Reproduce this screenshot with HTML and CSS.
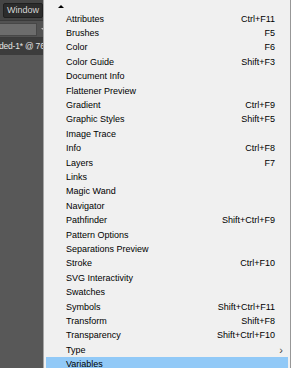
FILE: index.html
```html
<!doctype html>
<html>
  <head>
    <title>Window menu</title>
    <meta charset="UTF-8" />
    <link rel="stylesheet" href="styles.css">
  </head>
  <body>
    <div class="app">
      <div class="menubar">
        <button class="menubar-btn">Window</button>
        <div class="menubar-end"></div>
      </div>
      <div class="controlbar">
        <div class="ctl-input"></div>
        <span class="ctl-arrow"></span>
        <div class="controlbar-end"></div>
      </div>
      <div class="tabbar">
        <span class="doc-tab">ded-1* @ 76%</span>
      </div>
      <div class="workspace">
        <div class="pasteboard"></div>
        <div class="artboard-col">
          <div class="artboard">
            <p>h</p>
            <p>u</p>
            <p>c</p>
          </div>
        </div>
      </div>
    </div>

    <div class="dropdown">
      <div class="scroll-up"><span class="tri"></span></div>
      <ul class="items">
        <li><span>Attributes</span><span class="key">Ctrl+F11</span></li>
        <li><span>Brushes</span><span class="key">F5</span></li>
        <li><span>Color</span><span class="key">F6</span></li>
        <li><span>Color Guide</span><span class="key">Shift+F3</span></li>
        <li><span>Document Info</span></li>
        <li><span>Flattener Preview</span></li>
        <li><span>Gradient</span><span class="key">Ctrl+F9</span></li>
        <li><span>Graphic Styles</span><span class="key">Shift+F5</span></li>
        <li><span>Image Trace</span></li>
        <li><span>Info</span><span class="key">Ctrl+F8</span></li>
        <li><span>Layers</span><span class="key">F7</span></li>
        <li><span>Links</span></li>
        <li><span>Magic Wand</span></li>
        <li><span>Navigator</span></li>
        <li><span>Pathfinder</span><span class="key">Shift+Ctrl+F9</span></li>
        <li><span>Pattern Options</span></li>
        <li><span>Separations Preview</span></li>
        <li><span>Stroke</span><span class="key">Ctrl+F10</span></li>
        <li><span>SVG Interactivity</span></li>
        <li><span>Swatches</span></li>
        <li><span>Symbols</span><span class="key">Shift+Ctrl+F11</span></li>
        <li><span>Transform</span><span class="key">Shift+F8</span></li>
        <li><span>Transparency</span><span class="key">Shift+Ctrl+F10</span></li>
        <li><span>Type</span><span class="sub">&#8250;</span></li>
        <li class="active"><span>Variables</span></li>
      </ul>
    </div>
  </body>
</html>
```
FILE: styles.css
```css
html,
body {
  margin: 0;
  padding: 0;
  height: 100%;
  overflow: hidden;
}
body {
  font: 400 9px/1 'Liberation Sans', Arial, sans-serif;
  background: #585858;
}
.app {
  display: flex;
  flex-direction: column;
  height: 100%;
}

/* top application bar */
.menubar {
  display: flex;
  align-items: center;
  height: 20px;
  background: #454545;
  padding-left: 3px;
}
.menubar-btn {
  font: inherit;
  color: #d6d6d6;
  background: #2c2c2c;
  border: 1px solid #202020;
  border-radius: 2px;
  height: 15px;
  width: 40px;
  padding: 0;
  white-space: nowrap;
}
.menubar-end {
  margin-left: auto;
  align-self: stretch;
  width: 40px;
  background: #ececec;
}

.controlbar {
  display: flex;
  align-items: center;
  height: 16px;
  background: #525252;
  border-top: 1px solid #3a3a3a;
  border-bottom: 1px solid #3a3a3a;
}
.ctl-input {
  width: 36px;
  height: 11px;
  background: #6c6c6c;
  border: 1px solid #474747;
  border-left: 0;
}
.ctl-arrow {
  margin-left: 4px;
  border-left: 2px solid transparent;
  border-right: 2px solid transparent;
  border-top: 2px solid #bbb;
}
.controlbar-end {
  margin-left: auto;
  align-self: stretch;
  width: 40px;
  background: #3a3a3a;
}

.tabbar {
  height: 17px;
  display: flex;
  align-items: center;
  background: #3c3c3c;
  overflow: hidden;
}
.doc-tab {
  color: #e4e4e4;
  font-size: 8.5px;
  letter-spacing: -0.2px;
  margin-left: -1px;
  white-space: nowrap;
}

.workspace {
  flex: 1;
  display: flex;
}
.pasteboard {
  flex: 1;
  background: #585858;
}
.artboard-col {
  width: 40px;
  background: #3a3a3a;
  padding-top: 12px;
  display: flex;
}
.artboard {
  flex: 1;
  background: #ffffff;
  padding: 106px 0 0 37px;
  color: #333;
  font-size: 7px;
  line-height: 7px;
}
.artboard p {
  margin: 0;
}

/* the open Window menu */
.dropdown {
  position: absolute;
  top: 0;
  left: 43px;
  width: 242px;
  bottom: -10px;
  background: #f0f0f0;
  border-left: 1px solid #a5a5a5;
  border-right: 1px solid #979797;
  padding: 0 2px;
}
.scroll-up {
  height: 12px;
  padding-left: 12px;
  display: flex;
  align-items: center;
}
.tri {
  border-left: 3px solid transparent;
  border-right: 3px solid transparent;
  border-bottom: 3px solid #000;
}
.items {
  list-style: none;
  margin: 0;
  padding: 0;
}
.items li {
  display: flex;
  align-items: center;
  height: 14.4px;
  padding: 0 13px 0 20px;
  color: #000;
  white-space: nowrap;
}
.items .key {
  margin-left: auto;
}
.items .sub {
  margin-left: auto;
  margin-right: -8px;
  font-size: 11px;
  color: #444;
}
.items li.active {
  background: #91c9f7;
}
```
